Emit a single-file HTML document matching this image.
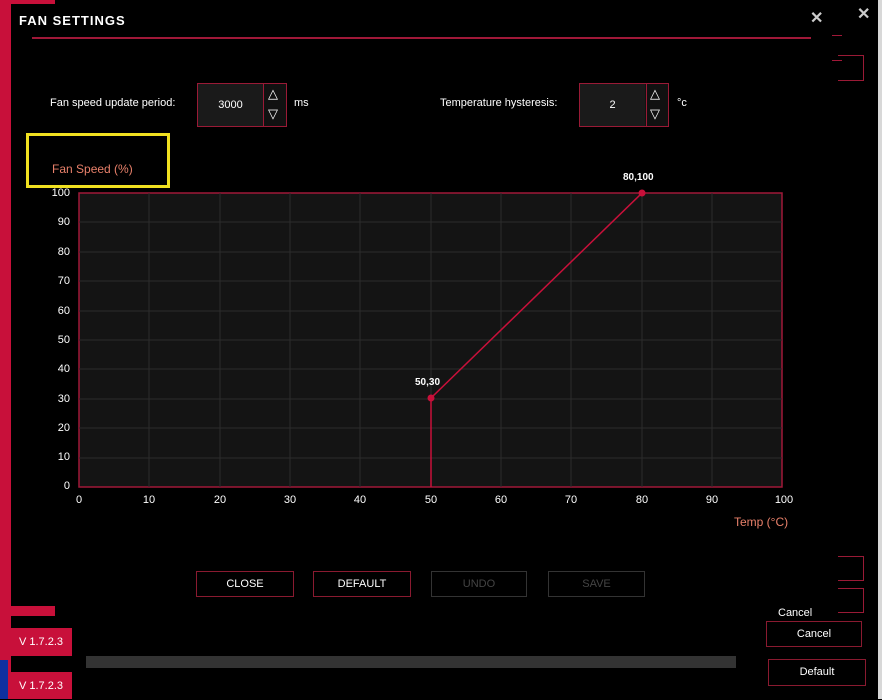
<!DOCTYPE html>
<html><head><style>
body{margin:0;width:882px;height:699px;background:#000;position:relative;overflow:hidden;font-family:"Liberation Sans",sans-serif;color:#fff}
.a{position:absolute}
.box{position:absolute;border:1px solid #9a1a36;box-sizing:border-box}
.btn{position:absolute;border:1px solid #8a1a30;box-sizing:border-box;font-size:11px;text-align:center;line-height:24px;font-family:"Liberation Sans Narrow","Liberation Sans",sans-serif}
.yl{position:absolute;left:50px;width:20px;text-align:right;font-size:11px}
.xl{position:absolute;top:494px;width:30px;text-align:center;font-size:11px}
</style></head><body>
<div class="a" style="left:0;top:0;width:11px;height:612px;background:#c8103a"></div>
<div class="a" style="left:0;top:0;width:55px;height:4px;background:#c8103a"></div>
<div class="a" style="left:0;top:606px;width:55px;height:10px;background:#c8103a"></div>
<div class="a" style="left:0;top:616px;width:11px;height:83px;background:#c8103a"></div>
<div class="a" style="left:0;top:660px;width:8px;height:39px;background:#1030a0"></div>
<div class="a" style="left:10px;top:628px;width:62px;height:28px;background:#c8103a;font-size:11px;line-height:28px;text-align:center">V 1.7.2.3</div>
<div class="a" style="left:10px;top:672px;width:62px;height:27px;background:#c8103a;font-size:11px;line-height:28px;text-align:center">V 1.7.2.3</div>
<div class="a" style="left:878px;top:0;width:4px;height:699px;background:#d8d8d8"></div>
<div class="a" style="left:86px;top:656px;width:650px;height:12px;background:#333"></div>

<div class="a" style="left:19px;top:13px;font-size:13px;font-weight:bold;letter-spacing:1px">FAN SETTINGS</div>
<div class="a" style="left:32px;top:37px;width:779px;height:2px;background:#a01838"></div>
<div class="a" style="left:810px;top:8px;font-size:16px;font-weight:bold;color:#ccc">✕</div>
<div class="a" style="left:857px;top:4px;font-size:16px;font-weight:bold;color:#ccc">✕</div>
<div class="a" style="left:832px;top:35px;width:10px;height:1px;background:#a01838"></div>
<div class="a" style="left:832px;top:60px;width:10px;height:1px;background:#a01838"></div>
<div class="box" style="left:838px;top:55px;width:26px;height:26px;border-left:none"></div>

<div class="a" style="left:50px;top:97px;font-size:11px">Fan speed update period:</div>
<div class="box" style="left:197px;top:83px;width:90px;height:44px;background:#111"></div>
<div class="a" style="left:198px;top:84px;width:65px;height:42px;background:#1a1a1a;font-size:11px;line-height:42px;text-align:center">3000</div>
<div class="a" style="left:263px;top:84px;width:1px;height:42px;background:#9a1a36"></div>
<div class="a" style="left:268px;top:86px;font-size:13px">△</div>
<div class="a" style="left:268px;top:106px;font-size:13px">▽</div>
<div class="a" style="left:294px;top:97px;font-size:11px">ms</div>

<div class="a" style="left:440px;top:97px;font-size:11px">Temperature hysteresis:</div>
<div class="box" style="left:579px;top:83px;width:90px;height:44px;background:#111"></div>
<div class="a" style="left:580px;top:84px;width:65px;height:42px;background:#1a1a1a;font-size:11px;line-height:42px;text-align:center">2</div>
<div class="a" style="left:646px;top:84px;width:1px;height:42px;background:#9a1a36"></div>
<div class="a" style="left:650px;top:86px;font-size:13px">△</div>
<div class="a" style="left:650px;top:106px;font-size:13px">▽</div>
<div class="a" style="left:677px;top:97px;font-size:11px">°c</div>

<div class="a" style="left:26px;top:133px;width:144px;height:55px;border:3px solid #f0e020;box-sizing:border-box"></div>
<div class="a" style="left:52px;top:162px;font-size:12px;color:#e8806a">Fan Speed (%)</div>

<svg class="a" style="left:0;top:0" width="882" height="699">
<rect x="79" y="193" width="703" height="294" fill="#141414" stroke="#a01838" stroke-width="1.5"/>
<g stroke="#2c2c2c" stroke-width="1">
<line x1="149" y1="193" x2="149" y2="487"/><line x1="220" y1="193" x2="220" y2="487"/><line x1="290" y1="193" x2="290" y2="487"/><line x1="360" y1="193" x2="360" y2="487"/><line x1="431" y1="193" x2="431" y2="487"/><line x1="501" y1="193" x2="501" y2="487"/><line x1="571" y1="193" x2="571" y2="487"/><line x1="642" y1="193" x2="642" y2="487"/><line x1="712" y1="193" x2="712" y2="487"/>
<line x1="79" y1="222" x2="782" y2="222"/><line x1="79" y1="252" x2="782" y2="252"/><line x1="79" y1="281" x2="782" y2="281"/><line x1="79" y1="311" x2="782" y2="311"/><line x1="79" y1="340" x2="782" y2="340"/><line x1="79" y1="369" x2="782" y2="369"/><line x1="79" y1="399" x2="782" y2="399"/><line x1="79" y1="428" x2="782" y2="428"/><line x1="79" y1="458" x2="782" y2="458"/>
</g>
<polyline points="431,487 431,398 642,193" fill="none" stroke="#c8103a" stroke-width="1.5"/>
<circle cx="431" cy="398" r="3.5" fill="#c8103a"/><circle cx="642" cy="193" r="3.5" fill="#c8103a"/>
</svg>
<div class="a" style="left:415px;top:377px;font-size:10px;font-weight:bold">50,30</div>
<div class="a" style="left:623px;top:172px;font-size:10px;font-weight:bold">80,100</div>
<div class="yl" style="top:187px">100</div><div class="yl" style="top:216px">90</div><div class="yl" style="top:246px">80</div><div class="yl" style="top:275px">70</div><div class="yl" style="top:305px">60</div><div class="yl" style="top:334px">50</div><div class="yl" style="top:363px">40</div><div class="yl" style="top:393px">30</div><div class="yl" style="top:422px">20</div><div class="yl" style="top:451px">10</div><div class="yl" style="top:480px">0</div>
<div class="xl" style="left:64px">0</div><div class="xl" style="left:134px">10</div><div class="xl" style="left:205px">20</div><div class="xl" style="left:275px">30</div><div class="xl" style="left:345px">40</div><div class="xl" style="left:416px">50</div><div class="xl" style="left:486px">60</div><div class="xl" style="left:556px">70</div><div class="xl" style="left:627px">80</div><div class="xl" style="left:697px">90</div><div class="xl" style="left:769px">100</div>
<div class="a" style="left:734px;top:515px;font-size:12px;color:#e8806a">Temp (°C)</div>

<div class="btn" style="left:196px;top:571px;width:98px;height:26px">CLOSE</div>
<div class="btn" style="left:313px;top:571px;width:98px;height:26px">DEFAULT</div>
<div class="btn" style="left:431px;top:571px;width:96px;height:26px;border-color:#333;color:#444">UNDO</div>
<div class="btn" style="left:548px;top:571px;width:97px;height:26px;border-color:#333;color:#444">SAVE</div>

<div class="box" style="left:838px;top:556px;width:26px;height:25px;border-left:none"></div>
<div class="box" style="left:838px;top:588px;width:26px;height:25px;border-left:none"></div>
<div class="a" style="left:778px;top:607px;font-size:11px">Cancel</div>
<div class="btn" style="left:766px;top:621px;width:96px;height:26px;background:#000">Cancel</div>
<div class="btn" style="left:768px;top:659px;width:98px;height:27px">Default</div>
</body></html>
